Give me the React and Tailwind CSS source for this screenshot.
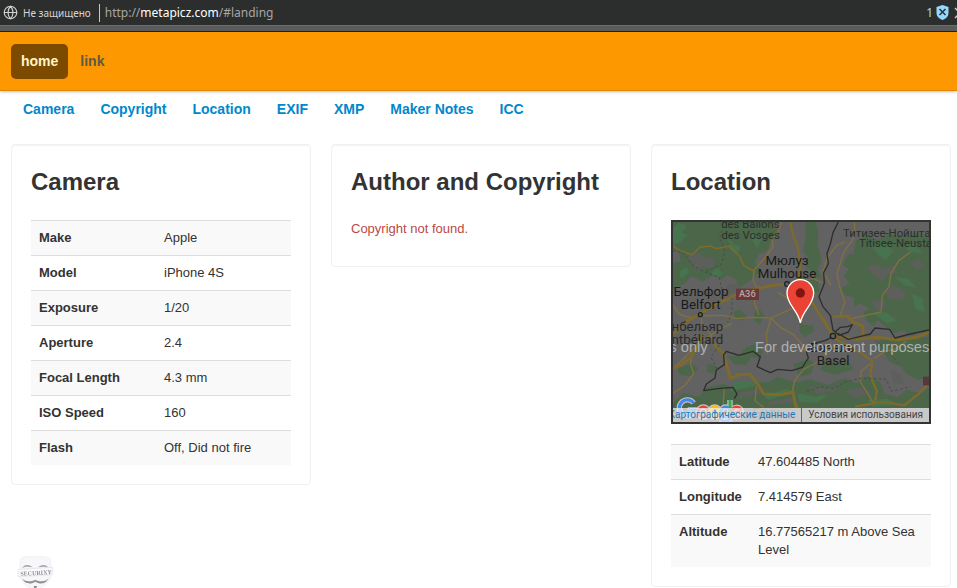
import React from 'react';
import { Globe } from 'lucide-react';

const tabs = ['Camera', 'Copyright', 'Location', 'EXIF', 'XMP', 'Maker Notes', 'ICC'];

const cameraRows = [
  ['Make', 'Apple'],
  ['Model', 'iPhone 4S'],
  ['Exposure', '1/20'],
  ['Aperture', '2.4'],
  ['Focal Length', '4.3 mm'],
  ['ISO Speed', '160'],
  ['Flash', 'Off, Did not fire'],
];

const locationRows = [
  ['Latitude', '47.604485 North'],
  ['Longitude', '7.414579 East'],
  ['Altitude', '16.77565217 m Above Sea Level'],
];

function AddressBar() {
  return (
    <div className="border-b border-[#222] bg-[#5a5b5d]">
      <div className="flex h-[26px] items-center overflow-hidden border-b border-[#6c6d6e] bg-[#2c2e2e] pl-[3px] font-['Noto_Sans','Open_Sans',sans-serif]">
        <Globe className="size-[15px] shrink-0 text-[#d0d0d0]" strokeWidth={1.8} />
        <span className="ml-[5px] text-[10px] whitespace-nowrap text-[#d4d4d4]">Не защищено</span>
        <span className="ml-2 h-[18px] w-px bg-[#c8c8c8]" />
        <span className="ml-[5px] text-[12px] whitespace-nowrap text-[#a6a6a6]">
          http://<span className="text-white">metapicz.com</span>/#landing
        </span>
        <div className="ml-auto flex items-center">
          <span className="text-[12px] text-[#a5d8f5]">1</span>
          <svg className="ml-[3px] h-[15px] w-[13px]" viewBox="0 0 13 15">
            <path d="M6.5 0 L12.5 2 V8 C12.5 11.500 9.500 14 6.500 15 C3.500 14 .5 11.500 .5 8 V2 Z" fill="#94d7ff" />
            <path d="M3.500 4 L9.500 10 M9.500 4 L3.500 10" stroke="#2c3438" strokeWidth="1.600" />
          </svg>
          <svg className="ml-[5px] h-3 w-[3px]" viewBox="0 0 3 12">
            <path d="M1 1 L6 6 L1 11" fill="none" stroke="#ccc" strokeWidth="1.500" />
          </svg>
        </div>
      </div>
      <div className="h-[5px]" />
    </div>
  );
}

function Card({ title, children }) {
  return (
    <section className="rounded border border-[#f0f0f0] bg-white p-[19px] shadow-[inset_0_1px_1px_rgba(0,0,0,0.05)]">
      <h3 className="mb-5 text-[24px] leading-9 font-bold whitespace-nowrap">{title}</h3>
      {children}
    </section>
  );
}

function DataTable({ rows, labelWidth }) {
  return (
    <table className="w-full table-fixed border-collapse text-left">
      <tbody>
        {rows.map(([label, value]) => (
          <tr key={label} className="border-t border-[#ddd] align-top odd:bg-[#f9f9f9]">
            <th scope="row" className={`${labelWidth} p-2 font-bold`}>{label}</th>
            <td className="p-2">{value}</td>
          </tr>
        ))}
      </tbody>
    </table>
  );
}

function MapDrawing() {
  return (
    <svg className="block h-full w-full" viewBox="6 6 768 600" preserveAspectRatio="xMidYMid slice">
      <rect x="0" y="0" width="780" height="612" fill="#626262" />
      {/* forests */}
      <g fill="#4c664a">
        <path d="M6 6 H312 L308 22 L326 38 L300 60 L290 90 L262 104 L252 128 L270 150 L246 176 L206 202 L192 176 L168 166 L150 180 L136 160 L96 184 L60 168 L42 190 L6 206 V130 L30 122 L22 96 L6 88 Z" />
        <path d="M404 6 H432 L442 34 L440 80 L452 118 L440 150 L452 176 L430 170 L416 150 L402 140 L410 112 L396 92 L404 60 Z" />
        <path d="M554 62 L590 46 L620 60 L650 42 L700 48 L740 40 L774 56 V345 L742 334 L720 352 L698 330 L672 340 L640 318 L620 300 L608 318 L588 304 L576 276 L596 268 L568 250 L550 262 L548 232 L522 226 L510 204 L536 192 L518 166 L534 148 L514 136 L530 106 L548 100 Z" />
        <path d="M378 166 L440 178 L446 214 L420 226 L424 198 L386 186 Z M250 276 L266 268 L280 286 L268 312 L250 304 Z M188 276 L204 268 L226 286 L216 302 L194 298 Z" />
        <path d="M224 382 L254 372 L274 390 L268 416 L240 412 L226 434 L190 432 L168 408 L204 406 Z M368 432 L412 418 L430 428 L420 462 L384 470 Z" />
        <path d="M650 352 L700 358 L774 350 V470 L740 480 L706 462 L690 440 L656 426 L640 400 L610 392 L620 364 Z" />
        <path d="M6 550 L36 520 L84 530 L110 500 L160 492 L192 508 L244 488 L292 486 L320 470 L372 488 L420 478 L470 496 L520 474 L556 490 L592 468 L626 486 L642 522 L680 532 L706 510 L750 520 L774 502 V564 H6 Z" />
        <path d="M384 312 L426 318 L430 336 L400 350 L386 336 Z M20 446 L60 430 L82 444 L58 468 L24 464 Z M110 430 L142 442 L130 462 L108 456 Z M460 420 L500 432 L530 422 L550 448 L492 464 L448 450 Z" />
      </g>
      <g fill="#5c5f5a">
        <path d="M50 108 L84 98 L104 112 L132 116 L126 146 L98 140 L82 154 L68 140 L60 124 Z M166 196 L194 190 L220 212 L200 224 L166 222 Z" />
        <path d="M588 142 L612 132 L640 146 L668 136 L680 158 L650 162 L636 186 L608 166 Z M636 212 L668 196 L706 218 L694 242 L656 238 Z M720 130 L744 116 L758 136 L738 152 Z M598 246 L632 236 L650 258 L618 274 Z" />
        <path d="M200 518 L276 506 L282 516 L206 536 Z M298 544 L376 532 L372 546 L290 556 Z M410 496 L468 506 L502 496 L496 512 L438 522 Z M520 514 L570 502 L600 520 L552 534 Z M660 450 L686 462 L700 488 L668 494 Z" />
      </g>
      <g fill="#48734f">
        <path d="M6 24 L24 8 L46 18 L34 38 L50 44 L26 68 L6 76 Z M172 48 L188 72 L210 80 L198 104 L178 90 Z M238 34 L274 54 L260 84 L248 70 Z M24 154 L46 142 L54 158 L30 176 Z M120 160 L140 142 L156 162 L138 174 Z" />
        <path d="M598 76 L642 68 L668 92 L646 120 L622 104 Z M700 66 L740 78 L754 102 L712 94 Z M670 170 L714 176 L736 204 L700 196 Z M722 222 L754 234 L760 276 L734 268 Z M610 282 L644 276 L678 302 L646 310 Z" />
        <path d="M190 486 L270 480 L250 498 L176 514 Z M280 526 L356 504 L348 524 L290 540 Z M380 520 L430 530 L474 522 L438 548 L386 546 Z M590 540 L650 536 L680 554 L604 562 Z" />
      </g>
      {/* minor roads */}
      <g fill="none" stroke="#80713f" strokeWidth="4" strokeLinejoin="round">
        <path d="M332 6 L322 34 L302 58 L306 80 L278 118 L250 148 L246 180 L258 204" />
        <path d="M550 6 L552 48 L518 98 L498 160 L508 208 L522 246 L506 290" />
        <path d="M718 96 L682 124 L660 160 L654 200 L634 226 L630 276 L584 286 L542 296" />
        <path d="M88 288 L158 286 L196 296 L252 292 L300 294 L350 272 L390 252" />
        <path d="M300 294 L328 322 L368 344 L392 372 L404 398 M300 294 L286 344 L290 402" />
        <path d="M322 218 L354 238 L376 266 L394 304 M262 206 L250 248 L264 284" />
        <path d="M6 446 L36 418 L80 374 L110 352 L142 330 L182 310" />
        <path d="M6 520 L42 496 L68 460 L58 432 L64 400" />
        <path d="M362 520 L372 480 L398 448 L428 432 L462 410 L480 368" />
        <path d="M160 506 L156 558 M256 500 L252 542 L278 562 M374 546 L388 590" />
        <path d="M600 430 L570 454 L568 486 L590 520 L606 548 M608 416 L642 394 L674 386 L706 364" />
        <path d="M6 254 L24 282 L54 292 L88 286 L94 314 L120 344 L130 374" />
        <path d="M454 188 L426 176 L376 182 M480 196 L456 154 L468 116 L496 76 L522 66" />
      </g>
      {/* highways */}
      <g fill="none" stroke="#7d6a2c" strokeWidth="9" strokeLinejoin="round">
        <path d="M6 78 L28 92 L64 104 L86 82 L118 78 L138 86 L174 78 L206 108 L218 136 L252 156" strokeWidth="5" />
        <path d="M6 342 L50 302 L90 280 L126 258 L168 238 L208 216 L266 204 L318 194 L376 192 L430 258 L466 314 L486 348" />
        <path d="M358 6 L366 44 L382 88 L388 134 L382 184" strokeWidth="7" />
        <path d="M484 290 L530 288 L546 306 L576 318 L576 350" />
        <path d="M486 342 L516 352 L560 358 L620 352 L680 360 L738 352 L774 336" />
        <path d="M490 356 L534 378 L578 404 L604 424 L598 468 L618 514 L610 550 L552 560" strokeWidth="7" />
        <path d="M608 548 L652 548 L700 556 L742 522 L774 490" strokeWidth="7" />
        <path d="M130 374 L158 402 L170 444 L178 476 L204 464 L236 462 L260 492 L278 522 L330 524 L366 516 L374 562" />
        <path d="M6 446 L32 434 L58 412 L82 374 L96 344" />
      </g>
      {/* borders */}
      <g fill="none" stroke="#2e2e2e" strokeWidth="4" strokeLinejoin="round">
        <path d="M502 6 L486 38 L478 72 L468 100 L472 132 L458 158 L460 190 L444 230 L456 260 L478 286 L486 330 L504 346 L532 336 L544 314 L530 320 L508 322 L492 336" />
        <path d="M500 340 L532 358 L566 350 L598 342 L612 324 L656 328 L672 354 L718 342 L774 330" />
        <path d="M490 348 L462 362 L430 370 L406 394 L412 414 L394 442 L362 452 L320 448 L298 458 L258 440 L268 410 L246 394 L204 406 L166 394 L158 404 L160 434 L136 450 L132 474 L106 492 L98 512 L140 506 L186 502 L198 522 L190 536" />
      </g>
      <g fill="none" stroke="#444f4a" strokeWidth="3" strokeDasharray="8 7">
        <path d="M6 92 L36 98 L66 136 L96 154 L144 172 L154 214 L184 238 L182 280 L170 306 M106 154 L150 134 L162 94 L146 54 L160 6" />
        <path d="M144 376 L120 412 L136 444 M408 514 L450 500 L488 506 L520 486 L574 474 L646 478 L660 514 L720 500 M614 362 L660 404 L682 430" />
      </g>
      <rect x="195" y="206" width="69" height="34" fill="#6d3739" />
      <rect x="756" y="470" width="20" height="26" fill="#58383a" />
      <g fill="#626262" stroke="#202020" strokeWidth="4">
        <circle cx="348" cy="192" r="7" />
        <circle cx="88" cy="284" r="6" />
        <circle cx="486" cy="348" r="8" />
      </g>
      <g className="font-[Roboto,sans-serif]" textAnchor="middle" fill="#1a1a1a" fontSize="40">
        <g fill="#2a302a" fontSize="34">
          <text x="238" y="24">des Ballons</text>
          <text x="239" y="56">des Vosges</text>
          <text x="516" y="50" textAnchor="start">Титизее-Нойштадт</text>
          <text x="564" y="81" textAnchor="start">Titisee-Neustadt</text>
        </g>
        <text x="348" y="134">Мюлуз</text>
        <text x="348" y="174">Mulhouse</text>
        <text x="90" y="227">Бельфор</text>
        <text x="89" y="266">Belfort</text>
        <text x="157" y="333" textAnchor="end" fill="#2a2a2a">Монбельяр</text>
        <text x="157" y="371" textAnchor="end" fill="#2a2a2a">Montbéliard</text>
        <text x="484" y="395">Базель</text>
        <text x="486" y="434">Basel</text>
        <text x="291" y="592" fill="#303030">Биль</text>
        <text x="229" y="232" fill="#b3a8a8" fontSize="28" fontWeight="500">A36</text>
      </g>
      <g className="font-['Liberation_Sans',Arial,sans-serif]" fill="#b0b0b0" fontSize="44">
        <text x="110" y="397" textAnchor="end">For development purposes only</text>
        <text x="252" y="397">For development purposes only</text>
      </g>
      {/* marker */}
      <path d="M388 309 C382 270 348 256 348 219 A40 40 0 0 1 428 219 C428 256 394 270 388 309 Z" fill="#ea4335" stroke="#fff" strokeWidth="4" />
      <circle cx="388" cy="219" r="14" fill="#811411" />
      {/* provider logo: pale outline first, coloured strokes over it */}
      {['outline', 'colour'].map((pass) => (
        <g key={pass} fill="none" strokeWidth={pass === 'outline' ? 16 : 9} stroke="#c4c4c4">
          <path d="M68 549 A24 24 0 1 0 72 570 H50" stroke={pass === 'outline' ? undefined : '#4285f4'} />
          <circle cx="97" cy="576" r="15" stroke={pass === 'outline' ? undefined : '#ea4335'} />
          <circle cx="131" cy="576" r="15" stroke={pass === 'outline' ? undefined : '#fbbc05'} />
          <path d="M178 560 V590 C178 606 156 608 151 598 M178 576 A14 15 0 1 1 150 576 A14 15 0 1 1 178 576" stroke={pass === 'outline' ? undefined : '#4285f4'} />
          <path d="M177 540 V590" stroke={pass === 'outline' ? undefined : '#34a853'} />
          <path d="M184 582 L210 571 C206 558 184 558 184 576 C184 592 204 594 210 583" stroke={pass === 'outline' ? undefined : '#ea4335'} />
        </g>
      ))}
    </svg>
  );
}

function LocationMap() {
  return (
    <div className="relative mb-5 h-[204px] overflow-hidden border-2 border-[#333]">
      <MapDrawing />
      <div className="absolute inset-x-0 bottom-0 flex h-[14px] justify-end gap-px font-[Roboto,sans-serif] text-[10px] leading-[14px] whitespace-nowrap">
        <div className="flex flex-1 justify-end overflow-hidden bg-[#f5f5f5]/70 pr-[6px]">
          <a href="#map-data" className="text-[#1f78b8]">Картографические данные</a>
        </div>
        <div className="bg-[#f5f5f5]/70 px-[6px]">
          <a href="#terms" className="text-[#444]">Условия использования</a>
        </div>
      </div>
    </div>
  );
}

function MaskLogo() {
  return (
    <svg className="fixed bottom-0 left-[17px] h-[33px] w-[37px]" viewBox="21 15 111 99">
      <path d="M30 34 C30 18 50 20 76 20 C104 20 122 18 122 36 V82 C114 102 98 114 76 118 C54 114 38 102 30 82 Z" fill="#f7f7f9" stroke="#ececf0" strokeWidth="2" />
      <path d="M36 54 C44 42 56 43 68 52 C56 49 46 49 36 54 Z M84 52 C96 43 108 42 116 54 C106 49 96 49 84 52 Z" fill="#a5a5aa" />
      <path d="M24 58 L128 52 V74 L24 80 Z" fill="#fafafc" stroke="#e0e0e6" strokeWidth="2" />
      <text x="31" y="75" transform="rotate(-3 76 66)" className="font-['Liberation_Serif',serif]" fontSize="18" fontWeight="700" fill="#8d8d96">SECURIXY</text>
      <path d="M36 84 C44 96 62 96 76 89 C90 96 108 96 116 84 C108 104 88 103 76 95 C64 103 44 104 36 84 Z" fill="#919198" />
      <path d="M71 108 H81 L78 118 H74 Z" fill="#88888e" />
    </svg>
  );
}

export default function App() {
  return (
    <div className="bg-white font-['Liberation_Sans',Arial,sans-serif] text-[13px] leading-[18px] text-[#333]">
      <AddressBar />

      <header className="border-b border-[#e08600] bg-[#fd9800] shadow-[0_1px_3px_rgba(0,0,0,0.25)]">
        <nav className="flex gap-[2px] px-[11px] pt-3 pb-[11px] text-[14px] font-bold">
          <a href="#landing" className="rounded-[5px] bg-[#7d4b00] px-[10px] py-2 leading-[19px] text-[#fff5cc]">home</a>
          <a href="#link" className="px-[10px] py-2 leading-[19px] text-[#5f5847]">link</a>
        </nav>
      </header>

      <nav className="flex gap-[26px] px-[23px] pt-[9px] text-[14px] font-bold text-[#0088cc]">
        {tabs.map((tab) => (
          <a key={tab} href={`#${tab}`} className="whitespace-nowrap">{tab}</a>
        ))}
      </nav>

      <main className="grid grid-cols-3 items-start gap-5 pt-[26px] pr-[6px] pl-[11px]">
        <Card title="Camera">
          <DataTable rows={cameraRows} labelWidth="w-[125px]" />
        </Card>
        <Card title="Author and Copyright">
          <p className="mb-[9px] text-[#b94a48]">Copyright not found.</p>
        </Card>
        <Card title="Location">
          <LocationMap />
          <DataTable rows={locationRows} labelWidth="w-[79px]" />
        </Card>
      </main>

      <MaskLogo />
    </div>
  );
}
